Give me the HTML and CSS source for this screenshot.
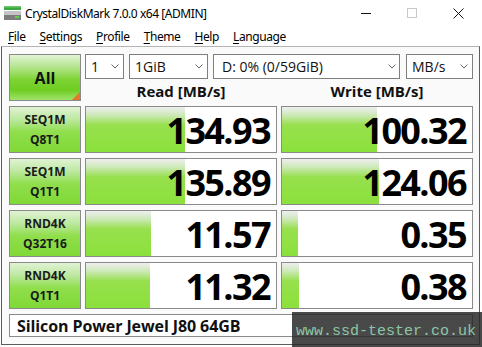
FILE: index.html
```html
<!DOCTYPE html>
<html>
<head>
<meta charset="utf-8">
<title>CrystalDiskMark</title>
<link rel="stylesheet" href="styles.css">
</head>
<body>
<div class="window">
  <div class="titlebar">
    <svg class="app-icon" width="17" height="15" viewBox="0 0 17 15">
      <rect x="0" y="0" width="17" height="4" fill="#3aa83e"/>
      <rect x="0" y="0" width="17" height="1.5" fill="#6cc66e"/>
      <rect x="0" y="5" width="17" height="9" fill="#7c7c7c"/>
      <rect x="0" y="5" width="17" height="4" fill="#c4c4c4"/>
      <rect x="11" y="10" width="4" height="2" fill="#5fd34a"/>
    </svg>
    <span class="title">CrystalDiskMark 7.0.0 x64 [ADMIN]</span>
    <div class="controls">
      <span class="ctl"><svg width="10" height="10" viewBox="0 0 10 10"><line x1="0" y1="5.5" x2="10" y2="5.5" stroke="#111" stroke-width="1"/></svg></span>
      <span class="ctl"><svg width="10" height="10" viewBox="0 0 10 10"><rect x="0.5" y="0.5" width="9" height="9" fill="none" stroke="#c8c8c8" stroke-width="1"/></svg></span>
      <span class="ctl"><svg width="11" height="11" viewBox="0 0 11 11"><path d="M0.5 0.5 L10.5 10.5 M10.5 0.5 L0.5 10.5" stroke="#111" stroke-width="1"/></svg></span>
    </div>
  </div>
  <div class="menubar">
    <span><u>F</u>ile</span>
    <span><u>S</u>ettings</span>
    <span><u>P</u>rofile</span>
    <span><u>T</u>heme</span>
    <span><u>H</u>elp</span>
    <span><u>L</u>anguage</span>
  </div>
  <div class="client">
    <div class="grid">
      <div class="all">All</div>
      <div class="top-right">
        <div class="selects">
          <div class="select s-count"><span>1</span><svg class="chev" width="8" height="5" viewBox="0 0 8 5"><path d="M0.5 0.5 L4 4 L7.5 0.5" fill="none" stroke="#666" stroke-width="1"/></svg></div>
          <div class="select s-size"><span>1GiB</span><svg class="chev" width="8" height="5" viewBox="0 0 8 5"><path d="M0.5 0.5 L4 4 L7.5 0.5" fill="none" stroke="#666" stroke-width="1"/></svg></div>
          <div class="select s-drive"><span>D: 0% (0/59GiB)</span><svg class="chev" width="8" height="5" viewBox="0 0 8 5"><path d="M0.5 0.5 L4 4 L7.5 0.5" fill="none" stroke="#666" stroke-width="1"/></svg></div>
          <div class="select s-unit"><span>MB/s</span><svg class="chev" width="8" height="5" viewBox="0 0 8 5"><path d="M0.5 0.5 L4 4 L7.5 0.5" fill="none" stroke="#666" stroke-width="1"/></svg></div>
        </div>
        <div class="headers">
          <div>Read [MB/s]</div>
          <div>Write [MB/s]</div>
        </div>
      </div>

      <div class="label">SEQ1M<br>Q8T1</div>
      <div class="result" style="--w:99px">134.93</div>
      <div class="result" style="--w:95px">100.32</div>

      <div class="label">SEQ1M<br>Q1T1</div>
      <div class="result" style="--w:99px">135.89</div>
      <div class="result" style="--w:97px">124.06</div>

      <div class="label">RND4K<br>Q32T16</div>
      <div class="result" style="--w:65px">11.57</div>
      <div class="result" style="--w:16px">0.35</div>

      <div class="label">RND4K<br>Q1T1</div>
      <div class="result" style="--w:64px">11.32</div>
      <div class="result" style="--w:17px">0.38</div>

      <div class="name">Silicon Power Jewel J80 64GB</div>
    </div>
  </div>
  <div class="watermark">www.ssd-tester.co.uk</div>
</div>
</body>
</html>
```
FILE: styles.css
```css
* { box-sizing: border-box; }
html, body { margin: 0; padding: 0; }
body {
  width: 482px;
  height: 347px;
  overflow: hidden;
  background: #fff;
  font-family: "Open Sans", "Noto Sans", sans-serif;
  color: #000;
}
.window {
  position: relative;
  width: 482px;
  height: 347px;
  background: #fff;
}

/* title bar */
.titlebar {
  height: 26px;
  display: flex;
  align-items: center;
  padding-left: 4px;
}
.app-icon { margin-right: 4px; flex: none; }
.title {
  font-family: "Noto Sans", sans-serif;
  font-size: 12px;
  letter-spacing: -0.45px;
  color: #000;
}
.controls { margin-left: auto; display: flex; }
.ctl {
  width: 46px;
  height: 26px;
  display: flex;
  align-items: center;
  justify-content: center;
}
.ctl:last-child { width: 47px; }

/* menu */
.menubar {
  height: 20px;
  display: flex;
  align-items: center;
  gap: 14px;
  padding-left: 8px;
  font-family: "Noto Sans", sans-serif;
  font-size: 12px;
  letter-spacing: -0.4px;
}
.menubar u { text-decoration-thickness: 1px; text-underline-offset: 2px; }

/* client area */
.client {
  margin-left: 1px;
  width: 479px;
  height: 299px;
  border: 1px solid #5c5c5c;
  border-top-color: #b4b4b4;
  background: #fafafa;
  padding: 7px 0 0 7px;
}
.grid {
  display: grid;
  grid-template-columns: 72px 192px 192px;
  grid-template-rows: 47px 47px 47px 47px 47px 23px;
  column-gap: 4px;
  row-gap: 5px;
}

.all {
  position: relative;
  border: 1px solid #8a8a8a;
  background: linear-gradient(to bottom, #e2f4d6 0%, #b2e48a 28%, #7dd333 55%, #6fcd22 78%, #9fe26c 100%);
  display: flex;
  align-items: center;
  justify-content: center;
  font-weight: 700;
  font-size: 16px;
  color: #111;
  padding-top: 1px;
}
.all::after {
  content: "";
  position: absolute;
  right: 0;
  bottom: 0;
  width: 0;
  height: 0;
  border-style: solid;
  border-width: 0 0 8px 8px;
  border-color: transparent transparent #e5772c transparent;
}

.top-right {
  grid-column: 2 / 4;
  display: flex;
  flex-direction: column;
}
.selects {
  height: 25px;
  display: flex;
}
.select {
  height: 25px;
  border: 1px solid #7f7f7f;
  background: #fff;
  display: flex;
  align-items: center;
  justify-content: space-between;
  padding: 0 4px 0 5px;
  font-size: 14px;
  color: #111;
}
.s-count { width: 39px; }
.s-size { width: 79px; margin-left: 5px; }
.s-drive { width: 187px; margin-left: 5px; padding-left: 8px; padding-right: 3px; }
.s-unit { width: 67px; margin-left: 6px; }
.chev { flex: none; }

.headers {
  flex: 1;
  display: grid;
  grid-template-columns: 192px 192px;
  column-gap: 4px;
  align-items: end;
  font-weight: 700;
  font-size: 15px;
  color: #111;
  text-align: center;
  line-height: 20px;
}

.label {
  border: 1px solid #8a8a8a;
  background: linear-gradient(to bottom, #e0f2d4 0%, #bce89f 28%, #90de4c 55%, #80d936 100%);
  display: flex;
  align-items: center;
  justify-content: center;
  text-align: center;
  font-weight: 700;
  font-size: 12px;
  line-height: 20px;
  color: #1b1b1b;
  padding-top: 1px;
}

.result {
  border: 1px solid #8a8a8a;
  background:
    linear-gradient(to bottom, #efefef 0%, #cde9b8 18%, #97e04d 40%, #8be13b 100%) no-repeat left top / var(--w) 100%,
    #fff;
  display: flex;
  align-items: center;
  justify-content: flex-end;
  padding: 3px 6px 0 0;
  font-weight: 700;
  font-size: 36px;
  letter-spacing: -1.6px;
  line-height: 1;
  color: #000;
}

.name {
  grid-column: 1 / 4;
  border: 1px solid #8a8a8a;
  background: #fff;
  display: flex;
  align-items: center;
  padding-left: 7px;
  font-weight: 700;
  font-size: 16px;
  letter-spacing: -0.1px;
  color: #111;
}

.watermark {
  position: absolute;
  right: 0;
  bottom: 0;
  width: 190px;
  height: 35px;
  background: rgba(38, 38, 38, 0.84);
  color: #8cc6a6;
  font-family: "Liberation Mono", "DejaVu Sans Mono", monospace;
  font-size: 15px;
  display: flex;
  align-items: center;
  padding: 3px 0 0 4px;
}
```
